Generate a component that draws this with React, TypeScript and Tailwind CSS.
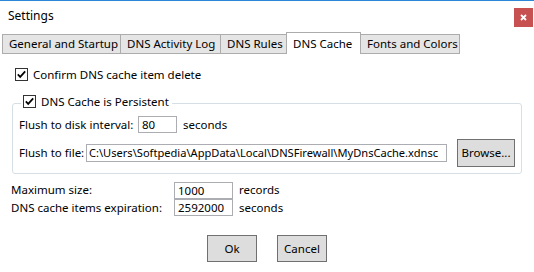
import React from "react";

function Check() {
  return (
    <svg width="13" height="13" viewBox="0 0 13 13" className="shrink-0 block">
      <rect x="0.5" y="0.5" width="12" height="12" fill="#ffffff" stroke="#333333" />
      <path d="M2.8 6.4 L5.2 8.9 L10.2 3.4" stroke="#000000" strokeWidth="1.7" fill="none" />
    </svg>
  );
}

function Tab({ label, w, selected }: { label: string; w: number; selected?: boolean }) {
  return (
    <div
      style={{ width: w }}
      className={
        selected
          ? "h-[22px] bg-white border border-b-0 border-[#acacac] pl-[6px] flex items-center -ml-px relative z-10"
          : "h-[20px] bg-[#e5e5e5] border border-[#acacac] pl-[6px] flex items-center -ml-px first:ml-0"
      }
    >
      <span className="whitespace-nowrap leading-[14px]">{label}</span>
    </div>
  );
}

export default function App() {
  return (
    <div
      className="w-[534px] h-[272px] bg-white border-t border-[#2b88d8] overflow-hidden text-black text-[11.5px]"
      style={{ fontFamily: '"Noto Sans", sans-serif' }}
    >
      {/* title bar */}
      <div className="h-[31px] flex justify-between items-start">
        <div className="pl-[8px] pt-[7px] text-[12px] leading-[16px]">Settings</div>
        <div className="mt-[7px] mr-[1px] w-[19px] h-[19px] bg-[#c75050] flex items-center justify-center">
          <svg width="7" height="7" viewBox="0 0 7 7">
            <path d="M1 1 L6 6 M6 1 L1 6" stroke="#ffffff" strokeWidth="1.8" />
          </svg>
        </div>
      </div>

      {/* tabs */}
      <div className="h-[22px] flex items-end pl-[2px]">
        <Tab label="General and Startup" w={119} />
        <Tab label="DNS Activity Log" w={101} />
        <Tab label="DNS Rules" w={67} />
        <Tab label="DNS Cache" w={75} selected />
        <Tab label="Fonts and Colors" w={100} />
      </div>

      {/* content */}
      <div className="flex flex-col">
        <div className="mt-[14px] pl-[15px] flex items-center gap-[5px] h-[13px]">
          <Check />
          <span className="leading-[13px] whitespace-nowrap">Confirm DNS cache item delete</span>
        </div>

        {/* group box */}
        <div className="relative mt-[22px] ml-[12px] w-[510px] h-[71px] border border-[#d5dfe5] rounded-[3px] pt-[12px] pl-[6px] pr-[6px]">
          <div className="absolute left-[8px] top-[-9px] bg-white px-[2px] pr-[3px] flex items-center gap-[5px] h-[13px]">
            <Check />
            <span className="leading-[13px] whitespace-nowrap">DNS Cache is Persistent</span>
          </div>

          <div className="flex items-center h-[17px]">
            <span className="w-[119px] whitespace-nowrap">Flush to disk interval:</span>
            <div className="w-[39px] h-[17px] border border-[#abadb3] pl-[3px] flex items-center leading-[15px]">80</div>
            <span className="ml-[6px]">seconds</span>
          </div>

          <div className="mt-[6px] flex items-center h-[28px]">
            <span className="w-[67px] whitespace-nowrap">Flush to file:</span>
            <div className="w-[361px] h-[18px] border border-[#abadb3] pl-[2px] flex items-center leading-[16px] overflow-hidden whitespace-nowrap text-[11.1px]">
              C:\Users\Softpedia\AppData\Local\DNSFirewall\MyDnsCache.xdnsc
            </div>
            <div className="ml-[10px] w-[58px] h-[28px] bg-[#dddddd] border border-[#707070] flex items-center justify-center">
              Browse...
            </div>
          </div>
        </div>

        {/* max size */}
        <div className="mt-[7px] pl-[11px] flex items-center h-[18px]">
          <span className="w-[163px] whitespace-nowrap">Maximum size:</span>
          <div className="w-[59px] h-[17px] border border-[#abadb3] pl-[3px] flex items-center leading-[15px]">1000</div>
          <span className="ml-[6px]">records</span>
        </div>
        <div className="pl-[11px] flex items-center h-[17px]">
          <span className="w-[163px] whitespace-nowrap">DNS cache items expiration:</span>
          <div className="w-[59px] h-[17px] border border-[#abadb3] pl-[3px] flex items-center leading-[15px]">2592000</div>
          <span className="ml-[6px]">seconds</span>
        </div>

        {/* buttons */}
        <div className="mt-[19px] flex justify-center gap-[20px]">
          <div className="w-[50px] h-[27px] bg-[#dddddd] border border-[#707070] flex items-center justify-center">Ok</div>
          <div className="w-[50px] h-[27px] bg-[#dddddd] border border-[#707070] flex items-center justify-center">Cancel</div>
        </div>
      </div>
    </div>
  );
}
